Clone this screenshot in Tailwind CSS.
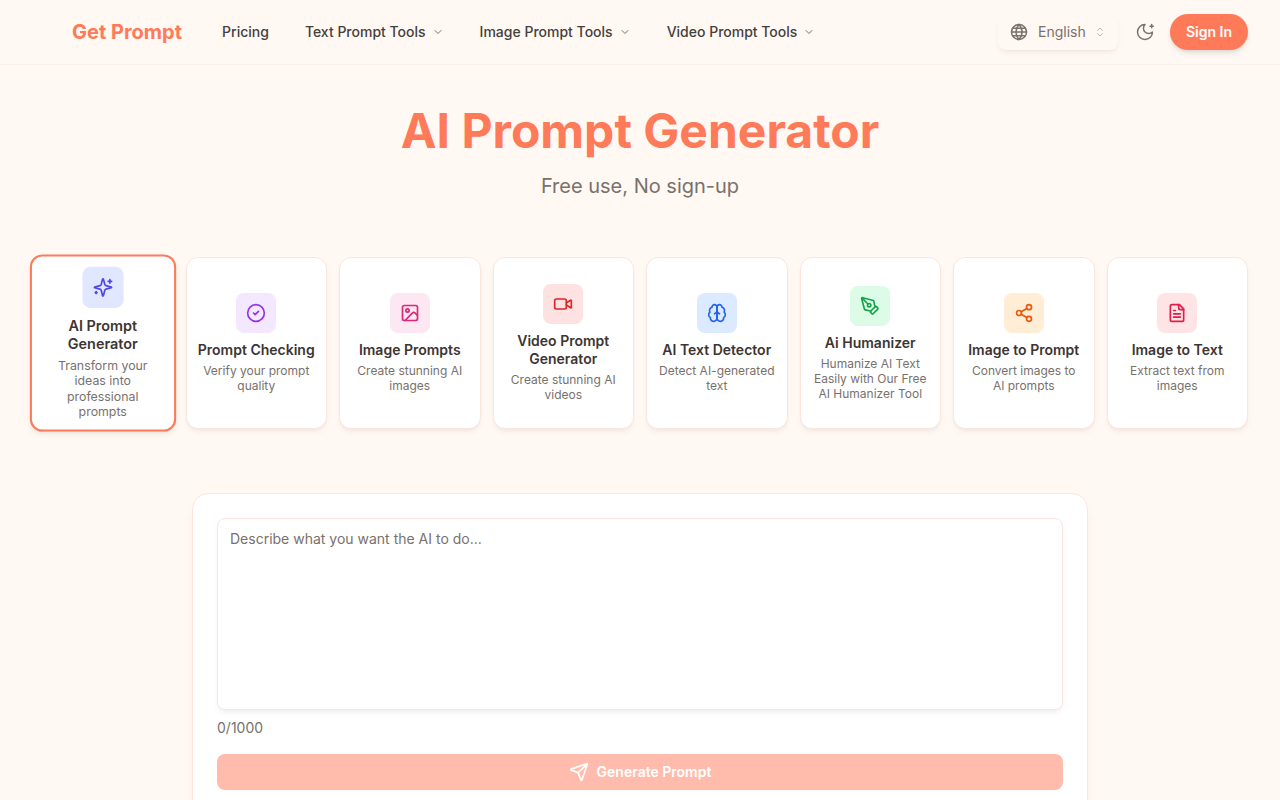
<!DOCTYPE html>
<html lang="en">
<head>
  <meta charset="UTF-8">
  <meta name="viewport" content="width=device-width, initial-scale=1.0">
  <title>Get Prompt - AI Prompt Generator</title>
  <script src="https://cdn.jsdelivr.net/npm/@tailwindcss/browser@4"></script>
</head>
<body class="h-screen overflow-hidden bg-[#fff8f3] font-['Inter',sans-serif] text-[#3d3533]">

  <!-- Header -->
  <header class="h-[65px] flex items-center justify-between pl-[72px] pr-8 border-b border-[#f8efe9]">
    <nav class="flex items-center gap-9 text-sm font-medium text-[#44403c]">
      <a class="text-xl font-bold text-[#ff7a59] mr-1">Get Prompt</a>
      <a>Pricing</a>
      <a class="flex items-center gap-1.5">Text Prompt Tools
        <svg class="w-3 h-3 text-[#78716c]" viewBox="0 0 24 24" fill="none" stroke="currentColor" stroke-width="2" stroke-linecap="round" stroke-linejoin="round"><path d="m6 9 6 6 6-6"/></svg>
      </a>
      <a class="flex items-center gap-1.5">Image Prompt Tools
        <svg class="w-3 h-3 text-[#78716c]" viewBox="0 0 24 24" fill="none" stroke="currentColor" stroke-width="2" stroke-linecap="round" stroke-linejoin="round"><path d="m6 9 6 6 6-6"/></svg>
      </a>
      <a class="flex items-center gap-1.5">Video Prompt Tools
        <svg class="w-3 h-3 text-[#78716c]" viewBox="0 0 24 24" fill="none" stroke="currentColor" stroke-width="2" stroke-linecap="round" stroke-linejoin="round"><path d="m6 9 6 6 6-6"/></svg>
      </a>
    </nav>
    <div class="flex items-center">
      <div class="w-[120px] h-9 flex items-center pl-3 pr-3 rounded-lg bg-[#fff8f3] shadow-md shadow-black/5 text-sm text-[#78716c]">
        <svg class="w-[18px] h-[18px] shrink-0" viewBox="0 0 24 24" fill="none" stroke="currentColor" stroke-width="2" stroke-linecap="round" stroke-linejoin="round"><circle cx="12" cy="12" r="10"/><path d="M12 2a14.5 14.5 0 0 0 0 20 14.5 14.5 0 0 0 0-20"/><path d="M2 12h20"/><path d="M3.6 7h16.8"/><path d="M3.6 17h16.8"/></svg>
        <span class="ml-2.5">English</span>
        <svg class="w-3 h-3 ml-auto opacity-50" viewBox="0 0 24 24" fill="none" stroke="currentColor" stroke-width="2" stroke-linecap="round" stroke-linejoin="round"><path d="m7 15 5 5 5-5"/><path d="m7 9 5-5 5 5"/></svg>
      </div>
      <svg class="w-5 h-5 ml-[17px] text-[#78716c]" viewBox="0 0 24 24" fill="none" stroke="currentColor" stroke-width="1.75" stroke-linecap="round" stroke-linejoin="round"><path d="M12 3a6 6 0 0 0 9 9 9 9 0 1 1-9-9Z"/><path d="M20 3v4"/><path d="M22 5h-4"/></svg>
      <button class="w-[78px] h-9 ml-[15px] rounded-full bg-[#ff7a59] text-sm font-semibold text-white shadow-md shadow-black/10">Sign In</button>
    </div>
  </header>

  <!-- Hero -->
  <section class="pt-[42px] text-center">
    <h1 class="text-5xl leading-12 font-bold text-[#ff7a59]">AI Prompt Generator</h1>
    <p class="mt-[17px] text-xl leading-7 text-[#78716c]">Free use, No sign-up</p>
  </section>

  <!-- Tool cards -->
  <section class="mt-[57px] px-8 grid grid-cols-8 gap-3 text-center">
    <div class="scale-[1.03] flex flex-col items-center justify-center p-2.5 rounded-xl bg-white border-2 border-[#ff7a59] shadow-md shadow-black/5">
      <div class="w-10 h-10 mb-2 flex items-center justify-center rounded-lg bg-[#e0e7ff] text-[#4f46e5]">
        <svg class="w-5 h-5" viewBox="0 0 24 24" fill="none" stroke="currentColor" stroke-width="2" stroke-linecap="round" stroke-linejoin="round"><path d="M9.937 15.5A2 2 0 0 0 8.5 14.063l-6.135-1.582a.5.5 0 0 1 0-.962L8.5 9.936A2 2 0 0 0 9.937 8.5l1.582-6.135a.5.5 0 0 1 .963 0L14.063 8.5A2 2 0 0 0 15.5 9.937l6.135 1.581a.5.5 0 0 1 0 .964L15.5 14.063a2 2 0 0 0-1.437 1.437l-1.582 6.135a.5.5 0 0 1-.963 0z"/><path d="M20 3v4"/><path d="M22 5h-4"/><path d="M4 17v2"/><path d="M5 18H3"/></svg>
      </div>
      <h3 class="text-sm leading-[18px] font-semibold">AI Prompt Generator</h3>
      <p class="mt-1 text-xs leading-[15px] text-[#78716c]">Transform your ideas into professional prompts</p>
    </div>

    <div class="flex flex-col items-center justify-center p-[11px] rounded-xl bg-white border border-[#fbe6de] shadow-md shadow-black/5">
      <div class="w-10 h-10 mb-2 flex items-center justify-center rounded-lg bg-[#f3e8ff] text-[#9333ea]">
        <svg class="w-5 h-5" viewBox="0 0 24 24" fill="none" stroke="currentColor" stroke-width="2" stroke-linecap="round" stroke-linejoin="round"><circle cx="12" cy="12" r="10"/><path d="m9 12 2 2 4-4"/></svg>
      </div>
      <h3 class="text-sm leading-[18px] font-semibold">Prompt Checking</h3>
      <p class="mt-1 text-xs leading-[15px] text-[#78716c]">Verify your prompt quality</p>
    </div>

    <div class="flex flex-col items-center justify-center p-[11px] rounded-xl bg-white border border-[#fbe6de] shadow-md shadow-black/5">
      <div class="w-10 h-10 mb-2 flex items-center justify-center rounded-lg bg-[#fce7f3] text-[#db2777]">
        <svg class="w-5 h-5" viewBox="0 0 24 24" fill="none" stroke="currentColor" stroke-width="2" stroke-linecap="round" stroke-linejoin="round"><rect width="18" height="18" x="3" y="3" rx="2" ry="2"/><circle cx="9" cy="9" r="2"/><path d="m21 15-3.086-3.086a2 2 0 0 0-2.828 0L6 21"/></svg>
      </div>
      <h3 class="text-sm leading-[18px] font-semibold">Image Prompts</h3>
      <p class="mt-1 text-xs leading-[15px] text-[#78716c]">Create stunning AI images</p>
    </div>

    <div class="flex flex-col items-center justify-center p-[11px] rounded-xl bg-white border border-[#fbe6de] shadow-md shadow-black/5">
      <div class="w-10 h-10 mb-2 flex items-center justify-center rounded-lg bg-[#fee2e2] text-[#dc2626]">
        <svg class="w-5 h-5" viewBox="0 0 24 24" fill="none" stroke="currentColor" stroke-width="2" stroke-linecap="round" stroke-linejoin="round"><path d="m16 13 5.223 3.482a.5.5 0 0 0 .777-.416V7.87a.5.5 0 0 0-.752-.432L16 10.5"/><rect x="2" y="6" width="14" height="12" rx="2"/></svg>
      </div>
      <h3 class="text-sm leading-[18px] font-semibold">Video Prompt Generator</h3>
      <p class="mt-1 text-xs leading-[15px] text-[#78716c]">Create stunning AI videos</p>
    </div>

    <div class="flex flex-col items-center justify-center p-[11px] rounded-xl bg-white border border-[#fbe6de] shadow-md shadow-black/5">
      <div class="w-10 h-10 mb-2 flex items-center justify-center rounded-lg bg-[#dbeafe] text-[#2563eb]">
        <svg class="w-5 h-5" viewBox="0 0 24 24" fill="none" stroke="currentColor" stroke-width="2" stroke-linecap="round" stroke-linejoin="round"><path d="M12 5a3 3 0 1 0-5.997.125 4 4 0 0 0-2.526 5.77 4 4 0 0 0 .556 6.588A4 4 0 1 0 12 18Z"/><path d="M12 5a3 3 0 1 1 5.997.125 4 4 0 0 1 2.526 5.77 4 4 0 0 1-.556 6.588A4 4 0 1 1 12 18Z"/><path d="M15 13a4.5 4.5 0 0 1-3-4 4.5 4.5 0 0 1-3 4"/><path d="M12 9v9"/></svg>
      </div>
      <h3 class="text-sm leading-[18px] font-semibold">AI Text Detector</h3>
      <p class="mt-1 text-xs leading-[15px] text-[#78716c]">Detect AI-generated text</p>
    </div>

    <div class="flex flex-col items-center justify-center p-[11px] rounded-xl bg-white border border-[#fbe6de] shadow-md shadow-black/5">
      <div class="w-10 h-10 mb-2 flex items-center justify-center rounded-lg bg-[#dcfce7] text-[#16a34a]">
        <svg class="w-5 h-5" viewBox="0 0 24 24" fill="none" stroke="currentColor" stroke-width="2" stroke-linecap="round" stroke-linejoin="round"><path d="M15.707 21.293a1 1 0 0 1-1.414 0l-1.586-1.586a1 1 0 0 1 0-1.414l5.586-5.586a1 1 0 0 1 1.414 0l1.586 1.586a1 1 0 0 1 0 1.414z"/><path d="m18 13-1.375-6.874a1 1 0 0 0-.746-.776L3.235 2.028a1 1 0 0 0-1.207 1.207L5.35 15.879a1 1 0 0 0 .776.746L13 18"/><path d="m2.3 2.3 7.286 7.286"/><circle cx="11" cy="11" r="2"/></svg>
      </div>
      <h3 class="text-sm leading-[18px] font-semibold">Ai Humanizer</h3>
      <p class="mt-1 text-xs leading-[15px] text-[#78716c]">Humanize AI Text Easily with Our Free AI Humanizer Tool</p>
    </div>

    <div class="flex flex-col items-center justify-center p-[11px] rounded-xl bg-white border border-[#fbe6de] shadow-md shadow-black/5">
      <div class="w-10 h-10 mb-2 flex items-center justify-center rounded-lg bg-[#ffedd5] text-[#ea580c]">
        <svg class="w-5 h-5" viewBox="0 0 24 24" fill="none" stroke="currentColor" stroke-width="2" stroke-linecap="round" stroke-linejoin="round"><circle cx="18" cy="5" r="3"/><circle cx="6" cy="12" r="3"/><circle cx="18" cy="19" r="3"/><line x1="8.59" x2="15.42" y1="13.51" y2="17.49"/><line x1="15.41" x2="8.59" y1="6.51" y2="10.49"/></svg>
      </div>
      <h3 class="text-sm leading-[18px] font-semibold">Image to Prompt</h3>
      <p class="mt-1 text-xs leading-[15px] text-[#78716c]">Convert images to AI prompts</p>
    </div>

    <div class="flex flex-col items-center justify-center p-[11px] rounded-xl bg-white border border-[#fbe6de] shadow-md shadow-black/5">
      <div class="w-10 h-10 mb-2 flex items-center justify-center rounded-lg bg-[#ffe4e6] text-[#e11d48]">
        <svg class="w-5 h-5" viewBox="0 0 24 24" fill="none" stroke="currentColor" stroke-width="2" stroke-linecap="round" stroke-linejoin="round"><path d="M15 2H6a2 2 0 0 0-2 2v16a2 2 0 0 0 2 2h12a2 2 0 0 0 2-2V7Z"/><path d="M14 2v4a2 2 0 0 0 2 2h4"/><path d="M10 9H8"/><path d="M16 13H8"/><path d="M16 17H8"/></svg>
      </div>
      <h3 class="text-sm leading-[18px] font-semibold">Image to Text</h3>
      <p class="mt-1 text-xs leading-[15px] text-[#78716c]">Extract text from images</p>
    </div>
  </section>

  <!-- Prompt form -->
  <main class="w-[896px] mx-auto mt-16 p-6 rounded-2xl bg-white border border-[#fbe6de] shadow-lg shadow-black/5">
    <textarea class="block w-full h-48 px-3 py-2.5 rounded-lg bg-white border border-[#fbe6de] shadow-md shadow-black/5 text-sm resize-none placeholder:text-[#78716c]" placeholder="Describe what you want the AI to do..."></textarea>
    <p class="mt-2 text-sm leading-5 text-[#78716c]">0/1000</p>
    <button class="w-full h-9 mt-4 flex items-center justify-center gap-2 rounded-lg bg-[#ffbcac] text-sm font-semibold text-white">
      <svg class="w-5 h-5" viewBox="0 0 24 24" fill="none" stroke="currentColor" stroke-width="2" stroke-linecap="round" stroke-linejoin="round"><path d="M14.536 21.686a.5.5 0 0 0 .937-.024l6.5-19a.496.496 0 0 0-.635-.635l-19 6.5a.5.5 0 0 0-.024.937l7.93 3.18a2 2 0 0 1 1.112 1.11z"/><path d="m21.854 2.147-10.94 10.939"/></svg>
      Generate Prompt
    </button>
  </main>

</body>
</html>
